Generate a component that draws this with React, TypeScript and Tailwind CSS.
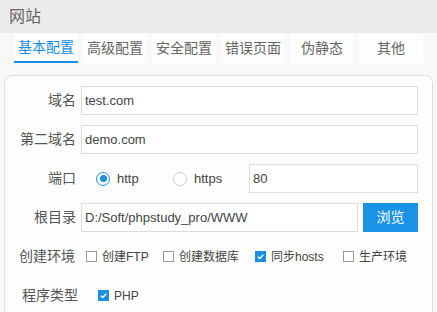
import React, { useState } from 'react';

const FONT = { fontFamily: '"Liberation Sans", "Noto Sans CJK SC", sans-serif' };

const tabs = ['基本配置', '高级配置', '安全配置', '错误页面', '伪静态', '其他'];

const Radio: React.FC<{ checked: boolean; label: string; onClick: () => void }> = ({ checked, label, onClick }) => (
    <button onClick={onClick} className="flex items-center gap-[7px] text-[13px] text-[#444]">
        <span className={`w-[14px] h-[14px] rounded-full border flex items-center justify-center bg-white ${checked ? 'border-[#1a8fe0]' : 'border-[#cfcfcf]'}`}>
            {checked && <span className="w-[7px] h-[7px] rounded-full bg-[#1a8fe0]" />}
        </span>
        {label}
    </button>
);

const Check: React.FC<{ checked: boolean; label: string; onClick: () => void }> = ({ checked, label, onClick }) => (
    <button onClick={onClick} className="flex items-center gap-[5px] text-[12px] text-[#444]">
        <span className={`w-[11px] h-[11px] flex items-center justify-center ${checked ? 'bg-[#1a8fe0]' : 'border border-[#999] bg-white'}`}>
            {checked && (
                <svg width="9" height="9" viewBox="0 0 10 10">
                    <path d="M2 5.2 L4.2 7.3 L8 3" fill="none" stroke="white" strokeWidth="1.6" />
                </svg>
            )}
        </span>
        {label}
    </button>
);

const Row: React.FC<{ label: string; children: React.ReactNode; labelClass?: string }> = ({ label, children, labelClass = 'text-right' }) => (
    <div className="flex items-center h-[29px]">
        <div className={`w-[70px] shrink-0 text-[14px] text-[#555] ${labelClass}`}>{label}</div>
        <div className="ml-[5px] flex-1 min-w-0 flex items-center">{children}</div>
    </div>
);

const Field: React.FC<{ value: string }> = ({ value }) => (
    <input
        defaultValue={value}
        className="flex-1 min-w-0 h-[29px] border border-[#dcdcdc] bg-white pl-[3px] text-[13px] text-[#444] outline-none"
        style={FONT}
    />
);

export default function App() {
    const [active, setActive] = useState(0);
    const [https, setHttps] = useState(false);
    const [opts, setOpts] = useState({ ftp: false, db: false, hosts: true, prod: false, php: true });
    const toggle = (k: keyof typeof opts) => setOpts(o => ({ ...o, [k]: !o[k] }));

    return (
        <div className="w-[437px] h-[312px] overflow-hidden bg-[#f8f8f8]" style={FONT}>
            <div className="h-[33px] bg-[#ebebeb] flex items-center pl-[9px] text-[16px] text-[#666]">网站</div>

            <div className="flex gap-[5px] pl-[14px] pt-[1px]">
                {tabs.map((t, i) => (
                    <button
                        key={t}
                        onClick={() => setActive(i)}
                        className={`w-[64px] h-[29px] bg-[#fdfdfd] text-[14px] flex items-center justify-center ${active === i ? 'text-[#1a8fe0] border-b-2 border-[#1a8fe0]' : 'text-[#666]'}`}
                    >
                        {t}
                    </button>
                ))}
            </div>

            <div className="mx-[4px] mt-[12px] h-[260px] border border-[#dedede] rounded-t-[8px] bg-[#fdfdfd] pt-[10px] pl-[1px] pr-[14px] flex flex-col gap-[10px]">
                <Row label="域名"><Field value="test.com" /></Row>
                <Row label="第二域名"><Field value="demo.com" /></Row>
                <Row label="端口">
                    <div className="ml-[15px] w-[77px] shrink-0"><Radio checked={!https} label="http" onClick={() => setHttps(false)} /></div>
                    <div className="w-[76px] shrink-0"><Radio checked={https} label="https" onClick={() => setHttps(true)} /></div>
                    <Field value="80" />
                </Row>
                <Row label="根目录">
                    <Field value="D:/Soft/phpstudy_pro/WWW" />
                    <button className="ml-[5px] shrink-0 w-[55px] h-[29px] bg-[#1a93e6] text-white text-[14px]">浏览</button>
                </Row>
                <Row label="创建环境" labelClass="text-right pr-[1px]">
                    <div className="ml-[5px] w-[77px] shrink-0"><Check checked={opts.ftp} label="创建FTP" onClick={() => toggle('ftp')} /></div>
                    <div className="w-[92px] shrink-0"><Check checked={opts.db} label="创建数据库" onClick={() => toggle('db')} /></div>
                    <div className="w-[88px] shrink-0"><Check checked={opts.hosts} label="同步hosts" onClick={() => toggle('hosts')} /></div>
                    <Check checked={opts.prod} label="生产环境" onClick={() => toggle('prod')} />
                </Row>
                <Row label="程序类型" labelClass="text-left pl-[16px] w-[72px]">
                    <div className="ml-[15px]"><Check checked={opts.php} label="PHP" onClick={() => toggle('php')} /></div>
                </Row>
            </div>
        </div>
    );
}
